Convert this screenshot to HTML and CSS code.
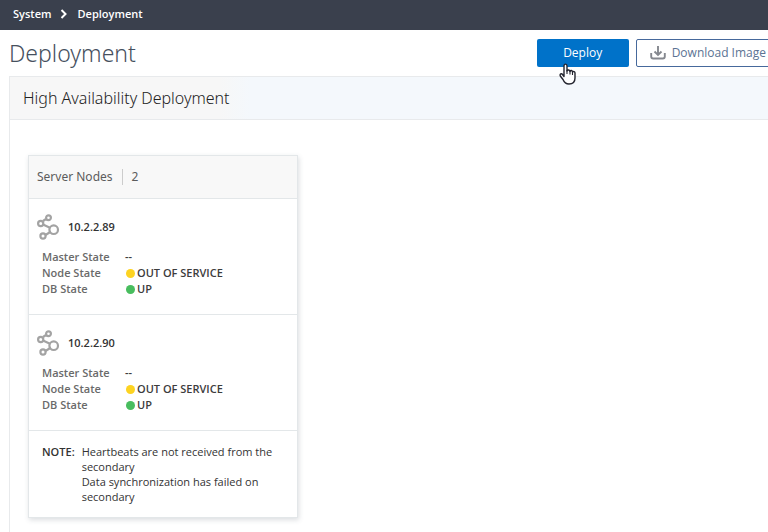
FILE: index.html
```html
<!DOCTYPE html>
<html lang="en">
<head>
<meta charset="utf-8">
<title>Deployment</title>
<link rel="stylesheet" href="styles.css">
</head>
<body>
<svg class="defs" aria-hidden="true">
  <symbol id="nodes" viewBox="0 0 24 26">
    <g fill="none" stroke="#a3a3a3" stroke-width="2.200">
      <path d="M9 5 6 7M6 10.500 13.500 14M14 17.500 8.500 21"/>
      <circle cx="11.500" cy="3.700" r="2.400"/>
      <circle cx="3.700" cy="9.500" r="2.600"/>
      <circle cx="16.700" cy="15.700" r="4.300"/>
      <circle cx="6" cy="22" r="2.600"/>
    </g>
  </symbol>
</svg>
<nav class="topbar" aria-label="Breadcrumb">
  <a href="#">System</a>
  <svg class="chevron" viewBox="0 0 8 10" aria-hidden="true"><path d="M1.500 1 5.500 5 1.500 9" fill="none" stroke="#fff" stroke-width="2"/></svg>
  <a href="#">Deployment</a>
</nav>
<header class="page-head">
  <h1>Deployment</h1>
  <div class="actions">
    <button class="btn primary" type="button">Deploy
      <svg class="pointer" viewBox="0 0 17 22" aria-hidden="true"><path d="M5 13.500V3C5 .5 8 .5 8 3v5C8.500 6.500 11 6.800 11 8.500 11.500 7 13.500 7.300 13.500 9 14.500 8 16 8.500 16 10v5c0 3.500-2 6-6 6-3.500 0-5-2-6-4.500L1.300 13C.5 11 2.500 10 3.500 11.500Z" fill="#fff" stroke="#23242e" stroke-width="1.400" stroke-linejoin="round"/><path d="M8 7v4M11 8v3.500M13.500 9v3" fill="none" stroke="#23242e" stroke-width="1.100"/></svg>
    </button>
    <button class="btn outline" type="button">
      <svg class="download" viewBox="0 0 16 14" aria-hidden="true"><path d="M8 0v8.500M4.500 5.500 8 9l3.500-3.500M1.200 7v3.500q0 2 2 2h9.600q2 0 2-2V7" fill="none" stroke="#85888f" stroke-width="1.900"/></svg>
      Download Image
    </button>
  </div>
</header>
<main class="panel">
  <h2>High Availability Deployment</h2>
  <section class="card">
    <h3><span>Server Nodes</span><span class="count">2</span></h3>
    <article class="node">
      <h4><svg class="node-icon" aria-hidden="true"><use href="#nodes"/></svg>10.2.2.89</h4>
      <dl>
        <dt>Master State</dt><dd>--</dd>
        <dt>Node State</dt><dd><i class="dot yellow"></i>OUT OF SERVICE</dd>
        <dt>DB State</dt><dd><i class="dot green"></i>UP</dd>
      </dl>
    </article>
    <article class="node">
      <h4><svg class="node-icon" aria-hidden="true"><use href="#nodes"/></svg>10.2.2.90</h4>
      <dl>
        <dt>Master State</dt><dd>--</dd>
        <dt>Node State</dt><dd><i class="dot yellow"></i>OUT OF SERVICE</dd>
        <dt>DB State</dt><dd><i class="dot green"></i>UP</dd>
      </dl>
    </article>
    <div class="note">
      <strong>NOTE:</strong>
      <div><p>Heartbeats are not received from the secondary</p><p>Data synchronization has failed on secondary</p></div>
    </div>
  </section>
</main>
</body>
</html>
```
FILE: styles.css
```css
* { box-sizing: border-box; }
body {
  margin: 0;
  min-height: 100vh;
  display: flex;
  flex-direction: column;
  overflow: hidden;
  background: #fff;
  color: #333;
  font: 11px/16px "Open Sans", "Noto Sans", sans-serif;
}
h1, h2, h3, h4, p, dl, dd { margin: 0; font-weight: 400; }
.defs { position: absolute; width: 0; height: 0; }
.topbar {
  display: flex;
  align-items: center;
  gap: 9px;
  height: 30px;
  padding: 0 13px 2px;
  background: #3a404d;
}
.topbar a { color: #fff; font-weight: 600; text-decoration: none; }
.chevron { width: 8px; height: 10px; }
.page-head {
  display: flex;
  justify-content: space-between;
  padding: 9px 0 8px 9px;
}
h1 { color: #46505e; font: 300 23px/29px "Noto Sans", sans-serif; }
.actions { display: flex; gap: 7px; margin-right: -14px; }
.btn {
  display: flex;
  align-items: center;
  justify-content: center;
  height: 28px;
  border-radius: 2px;
  font: 12px/16px "Open Sans", "Noto Sans", sans-serif;
  white-space: nowrap;
}
.primary { position: relative; width: 92px; border: 0; background: #0072c9; color: #fff; }
.outline { gap: 6px; padding: 0 15px 0 13px; border: 1px solid #46699c; background: #fff; color: #5b7393; }
.download { width: 16px; height: 14px; }
.pointer { position: absolute; left: 22px; top: 24px; width: 17px; height: 22px; }
.panel { flex: 1; margin-left: 9px; border-left: 1px solid #e8eaec; border-top: 1px solid #e8eaec; }
h2 {
  padding: 9px 13px;
  border-bottom: 1px solid #e8eaec;
  background: linear-gradient(90deg, #f7f7f7 0, #f7f7f7 210px, #f4f8fc 240px);
  color: #222;
  font: 300 16px/24px "Noto Sans", sans-serif;
}
.card {
  width: 270px;
  margin: 35px 18px 12px;
  border: 1px solid #e3e7e9;
  box-shadow: 1px 2px 5px rgba(60, 70, 90, .18);
  background: #fff;
}
h3 {
  display: flex;
  padding: 13px 8px;
  background: #f8f8f8;
  color: #5c5c5c;
  font: 12px/16px "Noto Sans", sans-serif;
}
.count { margin-left: 9px; padding-left: 9px; border-left: 1px solid #ccc; }
.node { height: 116px; padding: 16px 8px 0; border-top: 1px solid #e3e7e9; }
h4 { display: flex; align-items: center; gap: 7px; height: 26px; padding-bottom: 2px; color: #333; font-size: 11px; font-weight: 600; }
.node-icon { flex: none; width: 24px; height: 26px; }
dl { display: grid; grid-template-columns: 83px 1fr; margin: 8px 5px 0; font-weight: 600; }
dt { color: #6a6a6a; }
dd { display: flex; align-items: center; color: #3c3c3c; font-weight: 600; }
.dot { width: 9px; height: 9px; margin: 0 2px 0 1px; border-radius: 50%; }
.yellow { background: #fdd321; }
.green { background: #48bd5e; }
.note { display: flex; gap: 7px; padding: 13px; border-top: 1px solid #e3e7e9; line-height: 15px; }
.note strong { font-weight: 600; }
.note div { width: 200px; color: #333; font-weight: 300; }
```
